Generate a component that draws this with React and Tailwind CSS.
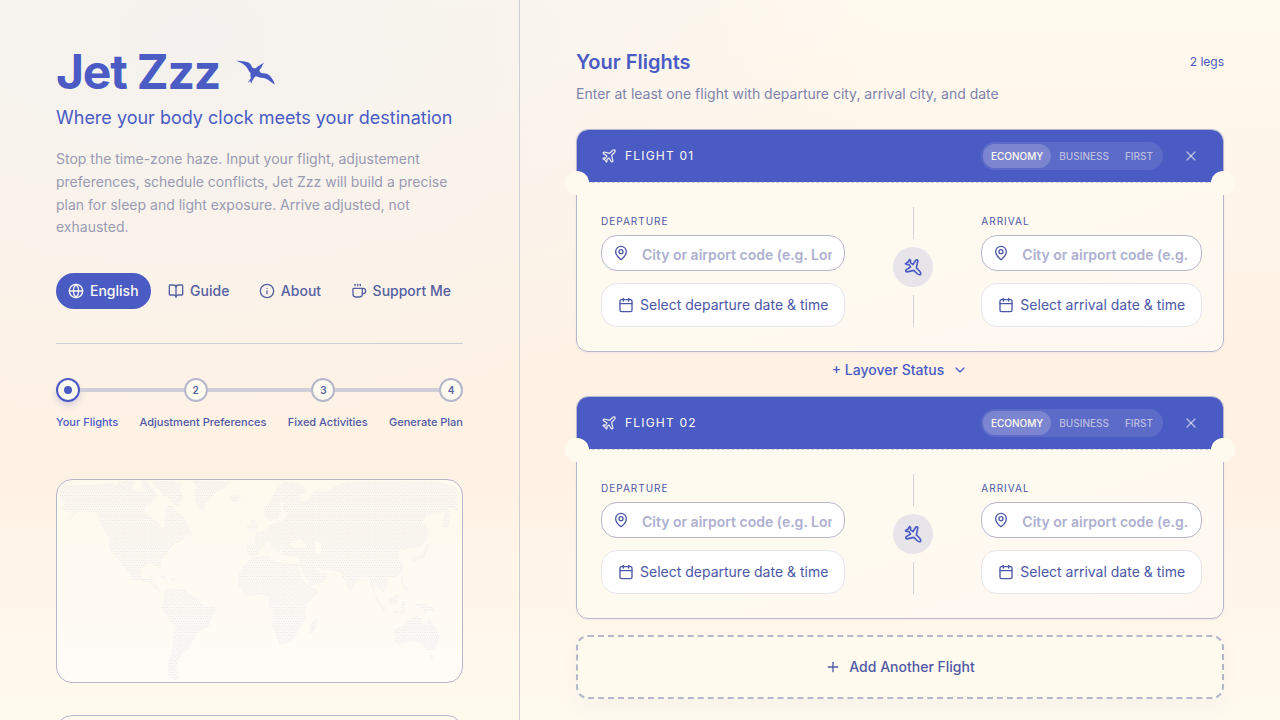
import React from "react";
import {
  BookOpen,
  Calendar,
  ChevronDown,
  Coffee,
  Globe,
  Info,
  MapPin,
  Plane,
  Plus,
  X,
} from "lucide-react";

const NAV = [
  { label: "English", icon: Globe, active: true },
  { label: "Guide", icon: BookOpen },
  { label: "About", icon: Info },
  { label: "Support Me", icon: Coffee },
];

const STEPS = ["Your Flights", "Adjustment Preferences", "Fixed Activities", "Generate Plan"];
const CABINS = ["Economy", "Business", "First"];

const LAND = [
  // North America
  "60,36 75,34 90,46 160,44 205,40 240,46 262,52 290,62 318,64 340,52 352,80 338,96 316,112 314,130 340,146 356,160 364,178 374,168 372,148 378,136 374,112 390,106 402,112 414,130 432,140 444,168 456,186 460,200 440,196 424,216 402,222 388,240 372,264 360,276 364,298 354,290 340,284 318,284 304,296 304,318 324,326 332,318 340,322 336,338 350,344 358,360 368,368 362,366 344,356 330,338 300,334 278,330 268,308 246,284 236,270 214,246 206,226 208,204 194,188 176,150 172,130 120,122 76,158 100,126 62,120 74,100 60,84",
  // Arctic archipelago
  "234,34 282,32 280,52 252,60 236,48",
  "300,32 322,32 336,60 318,66 306,50",
  "340,34 396,32 424,40 418,62 430,78 416,104 400,104 390,84 370,80 360,60 344,50",
  // Greenland and Iceland
  "458,32 572,34 560,52 532,66 510,84 496,102 492,126 478,118 466,98 464,70 470,50",
  "568,80 584,76 602,78 602,88 588,98 572,92",
  // Caribbean
  "352,308 366,314 380,322 374,330 360,318",
  "390,322 402,326 414,330 396,334",
  // South America
  "372,366 388,354 434,360 450,374 468,380 484,402 524,412 528,420 512,450 508,470 478,484 464,508 448,526 446,540 426,548 414,574 408,600 418,628 404,630 384,612 384,580 394,550 400,500 404,468 384,444 364,410 370,394",
  // Africa
  "636,262 688,256 696,270 724,278 776,280 786,312 808,350 834,358 832,370 800,406 796,420 798,448 780,470 764,500 746,520 718,526 706,488 694,464 700,430 684,404 686,382 670,374 620,378 594,350 596,314 614,284",
  "830,444 832,458 822,486 810,490 808,474 816,456",
  // Europe and Asia
  "622,222 648,224 640,206 650,186 682,176 694,160 714,160 708,150 684,152 674,134 672,112 690,92 706,60 730,36 762,34 796,54 798,70 780,76 776,92 796,96 826,60 856,66 886,48 920,34 1190,34 1252,50 1252,124 1222,110 1232,140 1226,168 1210,180 1208,156 1216,124 1200,130 1158,134 1148,160 1168,182 1160,212 1136,232 1100,236 1076,240 1078,262 1090,290 1084,310 1064,320 1044,324 1040,350 1030,366 1012,352 1000,336 1004,372 1020,396 1040,420 1028,420 1006,386 994,356 986,326 970,318 940,344 932,368 914,338 902,308 870,300 846,300 826,290 842,310 864,314 852,336 806,350 788,310 778,286 776,260 734,258 722,238 718,250 700,226 714,254 696,230 686,214 668,230 656,250 636,262 622,252",
  // British Isles
  "634,142 646,150 654,178 640,184 630,182 620,176 622,164 634,164",
  // Japan
  "1160,222 1170,224 1156,262 1132,268 1120,278 1116,268 1150,246",
  // South-east Asia
  "1072,370 1078,378 1068,404 1050,404 1044,390",
  "1084,304 1090,320 1086,336 1104,352 1104,370 1094,362 1084,338",
  "1084,394 1104,398 1092,410 1096,430 1082,412",
  "1052,420 1076,422 1104,430 1066,430",
  "1126,398 1150,402 1176,410 1188,426 1164,424 1156,438 1150,418 1128,408",
  // Australia and Tasmania
  "1062,480 1090,464 1104,450 1130,438 1144,444 1144,458 1160,464 1164,440 1180,462 1192,476 1200,500 1186,540 1158,540 1146,520 1112,514 1074,524 1064,516",
  "1168,554 1180,556 1178,570 1170,566",
];

const WATER = [
  // Black Sea, Caspian Sea, Baltic Sea, Red Sea
  "752,214 780,208 800,222 796,234 764,232 750,224",
  "826,214 842,220 844,244 836,256 828,244",
  "722,98 732,96 728,116 744,132 728,152 716,154 718,136 722,124",
  "772,288 780,288 808,344 802,346",
];

function Bird() {
  return (
    <svg viewBox="48 40 123 78" className="h-[26px] w-[41px]" fill="currentColor" aria-hidden="true">
      <path d="M48 45 L70 47 Q86 49 91 55 L98 66 Q103 69 108 67 Q112 62 120 59 Q125 53 132 52 Q125 59 125 65 L118 74 Q119 80 124 82 L141 84 Q150 88 155 97 Q161 105 165 117 Q153 109 144 102 Q133 95 122 96 L108 92 Q103 94 98 103 L93 114 L91 106 L83 111 Q90 102 93 97 Q90 90 92 83 Q86 76 82 68 Q76 59 66 53 Q57 49 48 45Z" />
    </svg>
  );
}

function WorldMap() {
  return (
    <svg viewBox="51 30 1215 606" className="block h-auto w-full" role="img" aria-label="World map">
      <defs>
        <pattern id="dots" x="51" y="30" width="7" height="14" patternUnits="userSpaceOnUse">
          <rect width="4" height="3" x="0" y="2" fill="#e6e5eb" />
          <rect width="4" height="3" x="3" y="9" fill="#e6e5eb" />
        </pattern>
      </defs>
      <g fill="url(#dots)">
        {LAND.map((points) => (
          <polygon key={points} points={points} />
        ))}
      </g>
      <g fill="#fffbf2">
        {WATER.map((points) => (
          <polygon key={points} points={points} />
        ))}
      </g>
    </svg>
  );
}

function Sidebar() {
  return (
    <aside className="flex h-full w-[520px] shrink-0 flex-col overflow-y-auto border-r border-[#cfcdd6] px-14 pt-12 [scrollbar-width:none]">
      <div className="flex items-center gap-4">
        <h1 className="text-5xl leading-none font-bold tracking-tight">Jet Zzz</h1>
        <Bird />
      </div>
      <p className="mt-2 text-lg leading-7">Where your body clock meets your destination</p>
      <p className="mt-4 text-sm leading-relaxed text-[#9a9ab3]">
        Stop the time-zone haze. Input your flight, adjustement preferences, schedule conflicts, Jet
        Zzz will build a precise plan for sleep and light exposure. Arrive adjusted, not exhausted.
      </p>

      <nav className="mt-[34px] flex justify-between border-b border-[#cfcdd6] pb-[34px]">
        {NAV.map(({ label, icon: Icon, active }) => (
          <button
            key={label}
            type="button"
            className={
              active
                ? "flex h-9 items-center gap-1.5 rounded-full bg-[#4a5bc4] px-3 text-sm font-medium text-[#fffaf0]"
                : "flex h-9 items-center gap-1.5 rounded-full px-3 text-sm font-medium text-[#5560a3]"
            }
          >
            <Icon size={16} />
            {label}
          </button>
        ))}
      </nav>

      <div className="mt-[34px]">
        <div className="flex items-center">
          {STEPS.map((step, i) => (
            <React.Fragment key={step}>
              {i > 0 && <span className="h-1 flex-1 bg-[#d0cfd9]" />}
              {i === 0 ? (
                <span className="flex size-6 items-center justify-center rounded-full border-2 border-[#4a5bc4] bg-[#fffaf0] shadow-[0_4px_6px_rgba(74,91,196,0.2)]">
                  <span className="size-2 rounded-full bg-[#4a5bc4]" />
                </span>
              ) : (
                <span className="flex size-6 items-center justify-center rounded-full border-2 border-[#b6b7cd] bg-[#fffaf0] text-[10px] font-semibold text-[#5560a3]">
                  {i + 1}
                </span>
              )}
            </React.Fragment>
          ))}
        </div>
        <ol className="mt-3 flex justify-between text-[11px] leading-4 font-medium">
          {STEPS.map((step, i) => (
            <li key={step} className={i === 0 ? "text-[#4a5bc4]" : "text-[#5058a5]"}>
              {step}
            </li>
          ))}
        </ol>
      </div>

      <div className="mt-[49px] shrink-0 overflow-hidden rounded-2xl border border-[#b6b7cd] bg-linear-to-b from-[#fffaee] to-[#fffbf7]">
        <WorldMap />
      </div>
      <div className="mt-8 h-40 shrink-0 rounded-2xl border border-[#b6b7cd] bg-[#fffaf0]" />
    </aside>
  );
}

function Endpoint({ id, title, kind }) {
  return (
    <div className="flex flex-col pt-1.5">
      <label htmlFor={id} className="text-[10px] leading-4 tracking-widest text-[#4c57a8] uppercase">
        {title}
      </label>
      <div className="relative mt-1.5">
        <MapPin size={16} className="absolute top-2.5 left-3 text-[#4c57a8]" />
        <input
          id={id}
          type="text"
          placeholder="City or airport code (e.g. London, LHR)"
          className="block h-9 w-full min-w-0 rounded-2xl border border-[#b6b7cd] bg-white pt-0.5 pr-3 pl-10 text-sm font-semibold outline-none placeholder:text-[#aeb0d0]"
        />
      </div>
      <button
        type="button"
        className="mt-3 flex h-11 items-center justify-center gap-1.5 rounded-2xl border border-[#e6e5eb] bg-white px-4 text-sm whitespace-nowrap text-[#4c57a8]"
      >
        <Calendar size={16} />
        Select {kind} date &amp; time
      </button>
    </div>
  );
}

function FlightCard({ number }) {
  return (
    <article className="relative rounded-xl border border-[#b6b7cd] bg-linear-to-br from-[#fffaee] via-[#fffaf0] to-[#fff8f1] shadow-[0_1px_2px_rgba(74,91,196,0.08)]">
      <header className="flex items-center justify-between rounded-t-[11px] border-b border-dashed border-[#d0cfd9] bg-[#4a5bc4] bg-clip-padding px-6 py-3 text-[#fffaf0]">
        <h3 className="flex items-center gap-2 text-xs tracking-widest">
          <Plane size={16} className="text-[#e4e2ea]" />
          FLIGHT {number}
        </h3>
        <div className="flex items-center gap-5">
          <div className="flex rounded-full bg-[#fffaf0]/10 p-0.5">
            {CABINS.map((cabin) => (
              <button
                key={cabin}
                type="button"
                className={
                  cabin === "Economy"
                    ? "h-6 rounded-full bg-[#fffaf0]/20 px-2 text-[10px] font-medium uppercase"
                    : "h-6 rounded-full px-2 text-[10px] font-medium text-[#fffaf0]/60 uppercase"
                }
              >
                {cabin}
              </button>
            ))}
          </div>
          <button type="button" aria-label={`Remove flight ${number}`} className="text-[#fffaf0]/60">
            <X size={16} />
          </button>
        </div>
      </header>
      <span className="absolute top-[41px] -left-3 size-6 rounded-full bg-[#fffaee]" />
      <span className="absolute top-[41px] -right-3 size-6 rounded-full bg-[#fffaee]" />

      <div className="grid grid-cols-[1fr_auto_1fr] gap-12 p-6">
        <Endpoint id={`departure-${number}`} title="Departure" kind="departure" />
        <div className="flex flex-col items-center gap-2">
          <span className="h-8 w-px bg-[#d3d2dc]" />
          <span className="flex size-10 items-center justify-center rounded-full bg-[#e7e5ea]">
            <Plane size={20} className="rotate-90 text-[#4a5bc4]" />
          </span>
          <span className="h-8 w-px bg-[#d3d2dc]" />
        </div>
        <Endpoint id={`arrival-${number}`} title="Arrival" kind="arrival" />
      </div>
    </article>
  );
}

export default function App() {
  return (
    <div className="flex h-screen overflow-hidden bg-[radial-gradient(ellipse_at_15%_5%,#f4f1ee_0%,transparent_45%),linear-gradient(to_bottom,#fff9ee_0%,#fff2e4_50%,#fff2e4_65%,#fffaee_100%)] font-['Inter',sans-serif] text-[#4a5bc4]">
      <Sidebar />
      <main className="h-full min-w-0 flex-1 overflow-y-auto px-14 py-12 [scrollbar-width:none]">
        <div className="flex items-center justify-between">
          <h2 className="text-xl leading-7 font-semibold">Your Flights</h2>
          <span className="text-xs">2 legs</span>
        </div>
        <p className="mt-2 mb-[25px] text-sm text-[#8083ae]">
          Enter at least one flight with departure city, arrival city, and date
        </p>
        <FlightCard number="01" />
        <div className="mb-2 flex justify-center">
          <button type="button" className="flex h-9 items-center gap-2 text-sm font-medium">
            + Layover Status
            <ChevronDown size={16} />
          </button>
        </div>
        <FlightCard number="02" />
        <button
          type="button"
          className="mt-4 flex h-16 w-full items-center justify-center gap-2 rounded-xl border-2 border-dashed border-[#b6b7cd] bg-[#fffaee] text-sm font-medium text-[#5058a5] shadow-[0_10px_20px_rgba(74,91,196,0.04)]"
        >
          <Plus size={16} />
          Add Another Flight
        </button>
      </main>
    </div>
  );
}
